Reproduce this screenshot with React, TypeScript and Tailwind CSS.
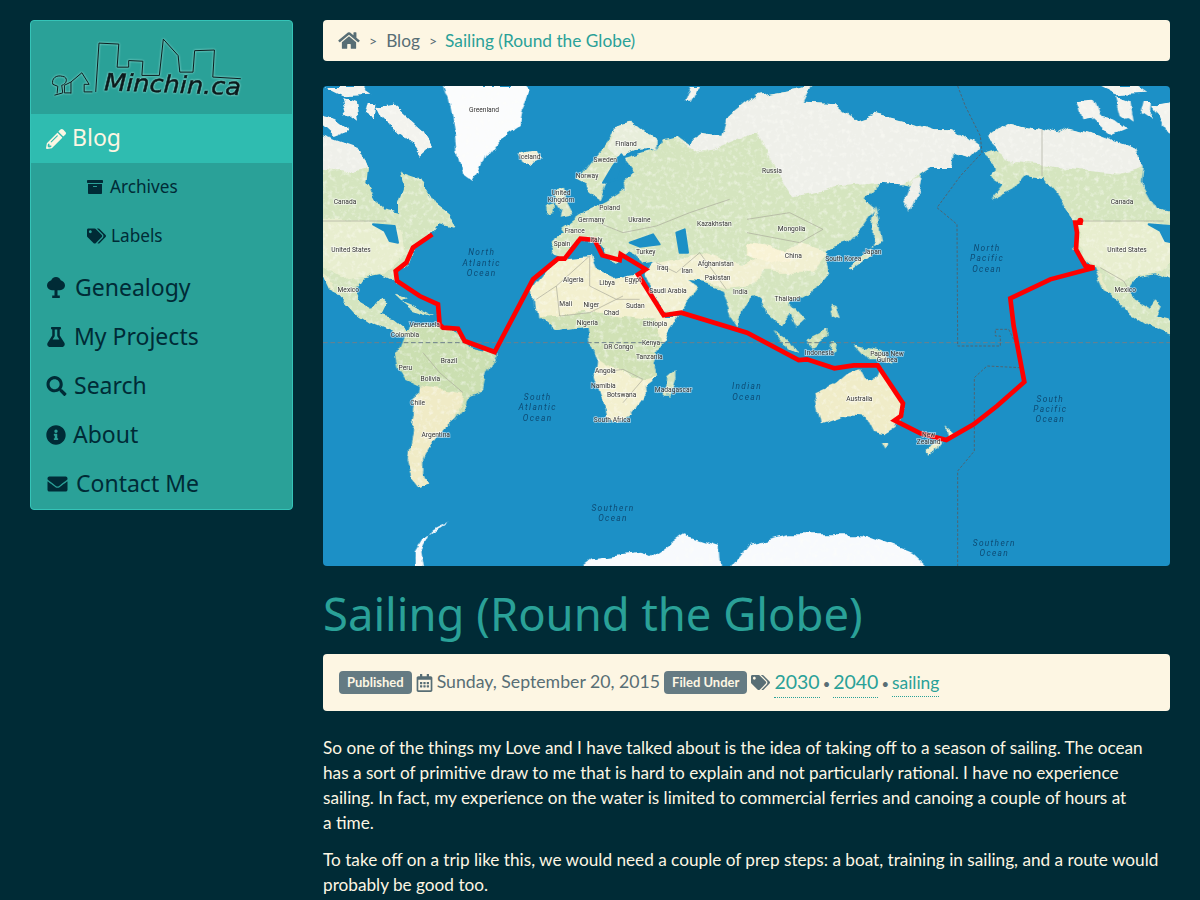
import type { ReactNode } from "react";
import { FaArchive, FaEnvelope, FaFlask, FaHome, FaInfoCircle, FaPencilAlt, FaRegCalendarAlt, FaSearch, FaTags } from "react-icons/fa";

const NOME = '"Noto Sans", "Open Sans", sans-serif';
const CORPO = 'Lato, "Open Sans", sans-serif';

// América do Norte em coordenadas do quadrante direito; o mapa repete o mundo a cada 2327 unidades
const NORTE_AMERICA =
  "720,150 780,105 880,130 930,145 965,125 1000,135 1060,150 1100,175 1170,190 1190,240 1185,290 1230,370 1280,380 1280,345 1295,300 1285,255 1345,275 1390,350 1430,380 1450,425 1405,415 1385,440 1355,470 1320,490 1305,530 1270,555 1275,595 1258,580 1225,565 1170,575 1145,610 1160,640 1205,665 1225,640 1245,660 1230,690 1270,700 1295,720 1300,745 1270,745 1210,720 1150,680 1100,625 1070,610 1040,545 985,490 990,430 970,390 940,340 890,280 830,270 800,310 730,345 770,295 725,265 750,240 710,205 760,190";
const ARTICO = "720,150 780,105 880,130 930,145 965,125 1060,150 1170,190 1190,240 1120,260 1000,250 900,240 800,230 760,190";
const ILHAS = [
  "985,40 1040,35 1060,90 1100,100 1140,130 1090,150 1030,95 1000,100",
  "1110,30 1150,45 1160,110 1125,85",
  "1190,45 1215,45 1210,105 1180,85",
  "1235,55 1265,50 1280,130 1250,110",
  "1215,60 1265,50 1355,130 1385,180 1345,215 1295,150 1245,120",
  "1060,0 1170,0 1200,20 1110,25",
];

const ROTA =
  "328,445 270,485 250,530 218,555 222,585 290,630 345,655 350,715 360,725 405,728 425,765 515,798 630,580 705,518 725,518 772,458 815,462 838,508 890,522 893,505 968,550 945,565 1022,688 1075,680 1272,740 1427,822 1452,820 1534,847 1592,838 1664,838 1740,952 1734,990 1715,1003 1792,1042 1870,1062 1952,1015 2022,960 2104,888 2072,720 2062,637 2182,580 2314,545 2287,540 2259,490 2262,440 2257,410 2272,410 2272,400";

const ROTULOS: [string, number, number][] = [
  ["Greenland", 483, 79], ["Iceland", 620, 220], ["Finland", 909, 179], ["Sweden", 847, 227], ["Norway", 792, 277],
  ["United", 714, 326], ["Kingdom", 714, 348], ["Poland", 860, 372], ["Germany", 805, 409], ["Ukraine", 949, 407],
  ["France", 755, 441], ["Italy", 820, 467], ["Spain", 717, 480], ["Turkey", 968, 505], ["Iraq", 1019, 551],
  ["Iran", 1092, 561], ["Afghanistan", 1178, 541], ["Pakistan", 1184, 582], ["India", 1252, 625], ["Kazakhstan", 1174, 420],
  ["Saudi Arabia", 1035, 620], ["Egypt", 930, 587], ["Algeria", 751, 589], ["Libya", 852, 596], ["Mali", 728, 661],
  ["Niger", 805, 662], ["Chad", 865, 686], ["Sudan", 937, 666], ["Nigeria", 793, 716], ["Ethiopia", 996, 720],
  ["Canada", 66, 355], ["United States", 84, 497], ["Mexico", 76, 618], ["Venezuela", 305, 722], ["Colombia", 246, 752],
  ["Peru", 247, 851], ["Brazil", 378, 832], ["Bolivia", 322, 886], ["Chile", 284, 957], ["Argentina", 338, 1053],
  ["DR Congo", 887, 789], ["Kenya", 984, 776], ["Tanzania", 979, 818], ["Angola", 847, 860], ["Namibia", 841, 905],
  ["Botswana", 896, 932], ["South Africa", 867, 1007], ["Madagascar", 1051, 919],
  ["Russia", 1347, 261], ["Mongolia", 1406, 435], ["China", 1411, 516], ["South Korea", 1561, 525], ["Japan", 1648, 503],
  ["Thailand", 1393, 646], ["Indonesia", 1489, 806], ["Papua New", 1692, 810], ["Guinea", 1692, 828], ["Australia", 1609, 946],
  ["New", 1817, 1053], ["Zealand", 1817, 1073], ["Canada", 2397, 355], ["United States", 2412, 497], ["Mexico", 2407, 618],
];

const OCEANOS: [string[], number, number][] = [
  [["North", "Atlantic", "Ocean"], 476, 508],
  [["South", "Atlantic", "Ocean"], 644, 942],
  [["Indian", "Ocean"], 1272, 910],
  [["Southern", "Ocean"], 870, 1275],
  [["North", "Pacific", "Ocean"], 1992, 495],
  [["South", "Pacific", "Ocean"], 2182, 947],
  [["Southern", "Ocean"], 2014, 1380],
];

function Mapa() {
  return (
    <svg viewBox="0 0 2541 1440" className="block h-[480px] w-[847px] rounded bg-[#1c90c6]">
      <defs>
        {/* recorta as costas e salpica o relevo, senão os polígonos ficam retos demais */}
        <filter id="costa" x="-3%" y="-3%" width="106%" height="106%">
          <feTurbulence type="fractalNoise" baseFrequency="0.014" numOctaves="5" seed="3" result="n" />
          <feDisplacementMap in="SourceGraphic" in2="n" scale="34" xChannelSelector="R" yChannelSelector="G" result="d" />
          <feTurbulence type="fractalNoise" baseFrequency="0.07" numOctaves="3" seed="8" result="m" />
          <feColorMatrix in="m" type="matrix" values="0 0 0 0 1  0 0 0 0 1  0 0 0 0 0.95  0 0 0 1.2 -0.6" result="s" />
          <feComposite in="s" in2="d" operator="in" result="sp" />
          <feMerge result="t">
            <feMergeNode in="d" />
            <feMergeNode in="sp" />
          </feMerge>
          <feGaussianBlur in="t" stdDeviation="1.2" />
        </filter>
      </defs>

      <g filter="url(#costa)">
        {/* América do Norte, nas duas pontas */}
        {[1272, -1055].map((dx) => (
          <g key={dx} transform={`translate(${dx} 0)`}>
            <polygon points={NORTE_AMERICA} fill="#d5e5bf" />
            <polygon points={ARTICO} fill="#eff0ea" />
            <polygon points="1000,400 1200,405 1290,430 1300,500 1240,560 1170,570 1110,580 1040,540 990,480" fill="#e8eecf" />
            {ILHAS.map((p) => (
              <polygon key={p} points={p} fill="#f3f3ee" />
            ))}
            <polygon points="1050,560 1065,570 1090,618 1075,610" fill="#e9ecc9" />
            <polygon points="1330,670 1400,690 1350,665 1290,640" fill="#d5e5bf" />
            <polygon points="1270,620 1310,630 1290,640" fill="#d5e5bf" />
          </g>
        ))}

        {/* Groenlândia, Islândia, ilhas britânicas */}
        <polygon points="360,0 610,0 625,15 600,70 590,120 530,160 490,210 470,260 455,285 420,260 400,200 395,140 385,90 375,40" fill="#fbfcfd" />
        <polygon points="585,200 640,190 655,215 620,235 595,225" fill="#efeed5" />
        <polygon points="695,310 720,305 730,350 748,385 710,392 715,370 700,350" fill="#dbe6c4" />
        <polygon points="672,352 695,345 695,375 675,380" fill="#cfe0b8" />

        {/* Eurásia */}
        <polygon
          fill="#d5e5bf"
          points="680,510 690,465 725,440 715,425 770,385 800,370 850,345 905,310 900,290 930,260 900,220 1000,190 1020,160 1060,150 1100,180 1130,140 1195,150 1210,100 1272,50 1300,30 1467,0 1442,50 1537,55 1592,100 1652,80 1772,110 1832,130 1892,130 1967,185 1942,215 1897,200 1892,240 1827,240 1797,260 1792,290 1762,380 1747,340 1762,300 1737,295 1672,290 1622,340 1657,370 1622,420 1572,470 1512,490 1527,560 1492,600 1442,630 1402,650 1447,700 1422,722 1402,680 1372,720 1332,680 1312,640 1285,620 1272,650 1245,720 1225,690 1200,610 1140,590 1090,585 1125,610 1075,675 1022,685 965,565 1000,530 960,535 920,495 895,510 885,525 850,510 820,470 770,460 745,490 725,520 705,518"
        />
        <polygon points="760,280 810,215 850,170 880,125 930,110 1000,165 1000,190 935,195 885,215 880,250 850,290 830,340 800,320 790,295" fill="#d8e6c2" />
        <polygon points="880,125 930,110 1000,165 1000,190 935,195 885,215 850,190" fill="#e8eedb" />
        <polygon points="1050,150 1100,180 1130,140 1195,150 1210,100 1272,50 1300,30 1467,0 1442,50 1537,55 1592,100 1652,80 1772,110 1832,130 1892,130 1967,185 1942,215 1897,200 1892,240 1827,240 1737,295 1672,290 1560,300 1420,330 1350,230 1300,140 1180,190 1120,200" fill="#eff0ea" />
        <polygon points="1000,530 1130,500 1260,540 1430,470 1520,500 1470,560 1330,560 1290,590 1200,600 1140,585 1090,585 1120,610 1075,670 1022,680 965,565" fill="#f2f0d2" />
        <polygon points="1272,470 1350,480 1410,510 1340,540 1272,510" fill="#f9f3d6" />
        <polygon points="1100,0 1125,0 1100,50 1080,50" fill="#f3f3ee" />
        <polygon points="1745,335 1770,275 1795,270 1790,300 1762,380" fill="#eff0ea" />
        <polygon points="1657,360 1665,400 1677,460 1642,475 1647,510 1592,550 1582,545 1647,480 1650,400" fill="#dbe6c4" />
        <polygon points="1517,650 1535,655 1547,700 1527,690" fill="#d5e5bf" />

        {/* África */}
        <polygon
          fill="#f3f0cf"
          points="795,725 690,735 640,690 628,610 700,520 800,510 815,545 880,575 950,565 1020,690 1070,690 1010,775 995,840 1000,870 960,900 965,935 930,985 880,1005 850,1000 838,950 815,870 820,810 800,770"
        />
        <polygon points="690,735 640,690 800,680 1000,700 1010,775 995,840 1000,870 960,880 880,850 820,810 800,770 795,725" fill="#d0e1b5" />
        <polygon points="1030,880 1060,855 1060,890 1045,935 1025,935" fill="#d5e5bf" />

        {/* América do Sul */}
        <polygon
          fill="#cbdfb1"
          points="265,720 240,740 215,805 225,850 250,885 285,900 270,1020 255,1120 270,1180 290,1205 315,1198 300,1165 300,1120 325,1070 365,1020 395,995 425,955 430,935 480,915 490,865 515,810 510,795 440,780 410,745 350,720"
        />
        <polygon points="285,900 420,920 395,995 365,1020 325,1070 300,1120 300,1165 315,1198 290,1205 270,1180 255,1120 270,1020" fill="#f0ebc6" />

        {/* Oceania e sudeste asiático */}
        <polygon points="1477,925 1532,900 1572,865 1617,850 1632,880 1652,880 1667,840 1712,920 1742,960 1717,1020 1682,1042 1647,1035 1627,995 1562,990 1497,1012 1487,970" fill="#f0ecc8" />
        <polygon points="1677,1065 1697,1065 1687,1085" fill="#e0e6c0" />
        <polygon points="1862,1015 1892,1040 1872,1060" fill="#e9ecc9" />
        <polygon points="1852,1060 1857,1070 1842,1105 1822,1115 1817,1105" fill="#e9ecc9" />
        <polygon points="1592,775 1672,795 1712,835 1667,820 1632,820" fill="#d0e1b5" />
        <polygon points="1357,735 1397,760 1427,805 1397,790" fill="#d0e1b5" />
        <polygon points="1447,760 1507,730 1507,760 1472,785" fill="#d0e1b5" />
        <polygon points="1522,770 1535,775 1530,800 1518,800" fill="#d0e1b5" />

        {/* Antártida */}
        <polygon points="745,1460 800,1420 950,1400 985,1410 1080,1345 1190,1380 1195,1460" fill="#f8fafd" />
        <polygon points="1205,1460 1272,1375 1392,1345 1472,1345 1612,1345 1762,1400 1827,1460" fill="#f8fafd" />
        <polygon points="380,1305 330,1330 310,1370 295,1400 305,1460 275,1460 275,1400 300,1360" fill="#f8fafd" />
      </g>

      {/* Mares interiores e lagos, sem o salpicado */}
      <g fill="#1c90c6" stroke="#1c90c6" strokeWidth="6" strokeLinejoin="round">
        <polygon points="920,470 990,445 1010,475 950,482" />
        <polygon points="1060,440 1085,430 1095,500 1070,500" />
        <polygon points="840,290 870,240 895,205 905,220 885,280" />
        <polygon points="150,415 215,420 225,470 200,465 185,435" />
        <polygon points="2477,415 2542,420 2552,470 2527,465 2512,435" />
      </g>

      {/* Fronteiras e linhas tracejadas */}
      <g fill="none" stroke="#a9a99a" strokeWidth="2">
        <polyline points="800,510 700,600 640,640" />
        <polyline points="800,510 800,600 880,640 950,640" />
        <polyline points="700,600 710,690 800,680 900,630" />
        <polyline points="1000,530 1060,560 1130,500 1210,610" />
        <polyline points="1272,400 1400,380 1500,430 1430,470 1272,440" />
        <polyline points="800,400 900,440 1000,420 1100,380 1220,340" />
        <polyline points="300,800 350,860 420,920" />
        <polyline points="830,860 900,850 960,880 900,950" />
        <polyline points="2262,405 2522,405" />
        <polyline points="2157,130 2157,270" />
        <polyline points="2332,545 2402,585 2422,620" />
        <polyline points="0,405 190,405" />
      </g>
      <line x1="0" y1="770" x2="2541" y2="770" stroke="#6e7f8a" strokeWidth="3" strokeDasharray="14 8" />
      <g fill="none" stroke="#4f6472" strokeWidth="3" strokeDasharray="8 5">
        <polyline points="1904,0 1927,60 1972,150 1977,200 1912,270 1842,365 1902,415 1904,780 2032,780 2032,750 2017,750 2017,730 2057,730 2077,770" />
        <polyline points="2092,845 1992,840 1954,875 1954,1095 1904,1155 1904,1440" />
      </g>

      <polyline points={ROTA} fill="none" stroke="#ff0000" strokeWidth="14" strokeLinejoin="miter" />
      <circle cx="2272" cy="404" r="9" fill="#ff0000" />

      <g fontFamily="Roboto, sans-serif" fontSize="20" fill="#333" stroke="#ffffff" strokeOpacity="0.6" strokeWidth="5" textAnchor="middle" style={{ paintOrder: "stroke" }}>
        {ROTULOS.map(([t, x, y]) => (
          <text key={t + x} x={x} y={y}>
            {t}
          </text>
        ))}
      </g>
      <g fontFamily="Roboto, sans-serif" fontSize="25" fontStyle="italic" fill="#0d4a73" letterSpacing="4" textAnchor="middle">
        {OCEANOS.map(([linhas, x, y]) =>
          linhas.map((l, i) => (
            <text key={l + x} x={x} y={y + i * 31}>
              {l}
            </text>
          )),
        )}
      </g>
    </svg>
  );
}

function Logo() {
  return (
    <svg viewBox="30 30 789 282" className="block h-[93px] w-[261px] drop-shadow-[0_0_1px_#bff5ec]">
      <g fill="none" stroke="#0b1a1c" strokeWidth="3" strokeLinejoin="round">
        <polyline points="225,245 235,97 295,100 290,170 325,170 325,150 368,152 365,195 418,195 430,85 475,135 480,185 520,185 525,120 585,118 580,200 665,205" />
        <polyline points="150,250 150,215 183,187 205,222 190,222 190,245 215,245" />
        <path d="M100 255 L125 248 L122 225 C138 222 142 200 125 198 C105 192 90 205 95 222 L110 228 L108 250 M150 215 L130 225 L130 248 L150 248" />
      </g>
      <text
        x="250"
        y="240"
        transform="rotate(2 250 240)"
        fontFamily='"DejaVu Sans", sans-serif'
        fontSize="72"
        fontStyle="italic"
        fill="#0b1a1c"
        stroke="#0b1a1c"
        strokeWidth="1.5"
        textLength={415}
        lengthAdjust="spacingAndGlyphs"
      >
        Minchin.ca
      </text>
    </svg>
  );
}

function Arvore({ className }: { className?: string }) {
  return (
    <svg viewBox="0 0 20 24" className={className} fill="currentColor">
      <path d="M10 1c2.4 0 4.2 1.500 4.700 3.300C16.700 4.800 19 6.700 19 9.300c0 2.700-2.200 4.900-5 4.900h-2.500v5.300h2.300V22H6.200v-2.500h2.300v-5.300H6c-2.800 0-5-2.200-5-4.900 0-2.600 2.300-4.500 4.300-5C5.800 2.500 7.600 1 10 1z" />
    </svg>
  );
}

function ItemNav({ icone, texto, gap }: { icone: ReactNode; texto: string; gap: string }) {
  return (
    <a className={`flex h-[49px] items-center pl-[15px] text-[23px] text-[#002b36] ${gap}`} style={{ fontFamily: NOME }}>
      {icone}
      {texto}
    </a>
  );
}

function SubItem({ icone, texto, gap }: { icone: ReactNode; texto: string; gap: string }) {
  return (
    <a className={`flex h-[49px] items-center pb-[2px] pl-[56px] text-[17.2px] text-[#002b36] ${gap}`} style={{ fontFamily: NOME }}>
      {icone}
      {texto}
    </a>
  );
}

function Pilula({ children }: { children: ReactNode }) {
  return <span className="rounded bg-[#657b83] px-2 py-1 text-[13px] font-bold leading-[15px] text-[#fdf6e3]">{children}</span>;
}

function Etiqueta({ children, classe }: { children: ReactNode; classe: string }) {
  return <a className={`border-b border-dotted border-[#2aa198] text-[#2aa198] ${classe}`}>{children}</a>;
}

export default function App() {
  return (
    <div className="flex h-[900px] items-start gap-[30px] overflow-hidden bg-[#002b36] pl-[30px] pr-[30px] pt-[20px]" style={{ fontFamily: CORPO }}>
      <aside className="w-[263px] shrink-0 rounded border border-[#35c4b8] bg-[#2aa198] pb-[1px]">
        <Logo />
        <a className="flex h-[49px] items-center gap-[6px] bg-[#2fbcb0] pb-[3px] pl-[15px] text-[23px] text-[#fdf6e3]" style={{ fontFamily: NOME }}>
          <FaPencilAlt className="mt-[3px] h-[20px] w-[20px]" />
          Blog
        </a>
        <SubItem gap="gap-[7px]" icone={<FaArchive className="h-[16px] w-[16px]" />} texto="Archives" />
        <SubItem gap="gap-[5px]" icone={<FaTags className="h-[18px] w-[19px]" />} texto="Labels" />
        <div className="pt-[2px]">
          <ItemNav gap="gap-[9px]" icone={<Arvore className="h-[24px] w-[20px]" />} texto="Genealogy" />
          <ItemNav gap="gap-[8px]" icone={<FaFlask className="h-[20px] w-[20px]" />} texto="My Projects" />
          <ItemNav gap="gap-[7px]" icone={<FaSearch className="h-[20px] w-[21px]" />} texto="Search" />
          <ItemNav gap="gap-[7px]" icone={<FaInfoCircle className="h-[20px] w-[20px]" />} texto="About" />
          <ItemNav gap="gap-[7px]" icone={<FaEnvelope className="h-[20px] w-[23px]" />} texto="Contact Me" />
        </div>
      </aside>

      <main className="w-[847px] shrink-0">
        <nav className="flex h-[41px] items-center rounded bg-[#fdf6e3] pl-[15px] text-[17.3px] text-[#586e75]">
          <FaHome className="mr-[9px] h-[19px] w-[22px] text-[#586e75]" />
          <span className="mr-[9px] text-[14px]">&gt;</span>
          <span className="mr-[9px]">Blog</span>
          <span className="mr-[8px] text-[14px]">&gt;</span>
          <span className="text-[#2aa198]">Sailing (Round the Globe)</span>
        </nav>

        <div className="mt-[25px]">
          <Mapa />
        </div>

        <h1 className="mt-[17px] text-[45.400px] leading-[60px] text-[#2aa198]" style={{ fontFamily: NOME }}>
          Sailing (Round the Globe)
        </h1>

        <div className="mt-[11px] flex h-[57px] items-center gap-[4px] rounded bg-[#fdf6e3] pl-[16px] text-[17.700px] text-[#586e75]">
          <Pilula>Published</Pilula>
          <FaRegCalendarAlt className="h-[18px] w-[17px]" />
          <span>Sunday, September 20, 2015</span>
          <Pilula>Filed Under</Pilula>
          <FaTags className="h-[17px] w-[19px]" />
          <span className="flex items-baseline gap-[3px]">
            <Etiqueta classe="text-[19.500px]">2030</Etiqueta>
            <span className="text-[13px]">•</span>
            <Etiqueta classe="text-[19.500px]">2040</Etiqueta>
            <span className="text-[13px]">•</span>
            <Etiqueta classe="text-[17.400px]">sailing</Etiqueta>
          </span>
        </div>

        <div className="mt-[24px] text-[17.200px] leading-[25px] text-[#fdf6e3]">
          <p>
            So one of the things my Love and I have talked about is the idea of taking off to a season of sailing. The ocean
            <br />
            has a sort of primitive draw to me that is hard to explain and not particularly rational. I have no experience
            <br />
            sailing. In fact, my experience on the water is limited to commercial ferries and canoing a couple of hours at
            <br />
            a time.
          </p>
          <p className="mt-[12px]">
            To take off on a trip like this, we would need a couple of prep steps: a boat, training in sailing, and a route would
            <br />
            probably be good too.
          </p>
        </div>
      </main>
    </div>
  );
}
